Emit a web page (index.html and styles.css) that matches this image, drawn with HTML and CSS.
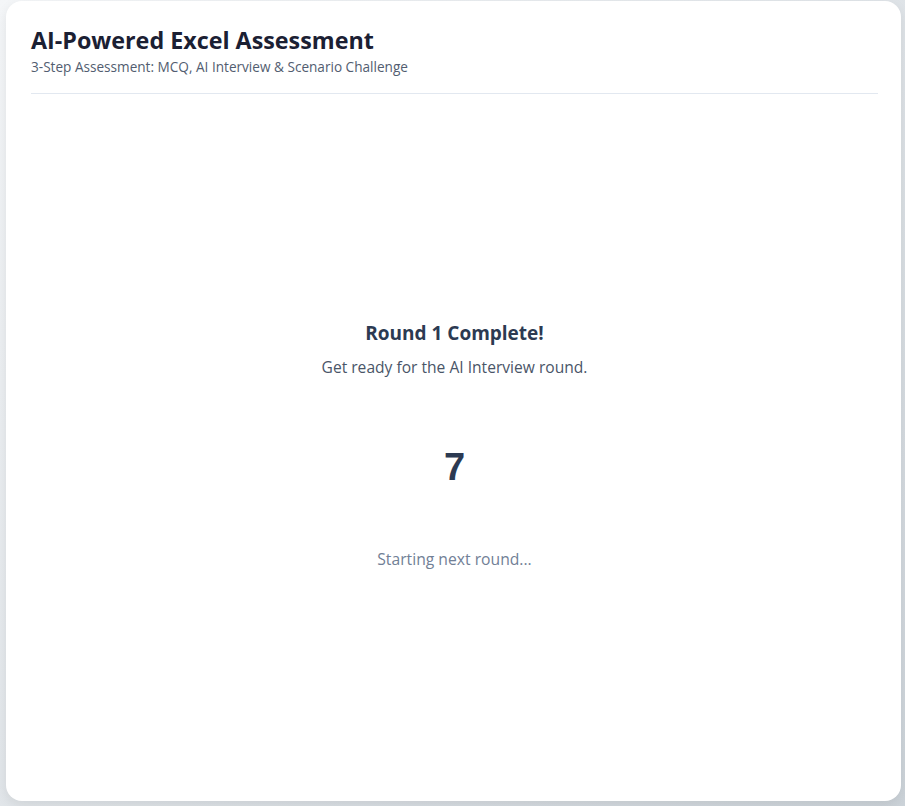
FILE: index.html
```html
<!DOCTYPE html>
<html lang="en">
<head>
<meta charset="utf-8">
<title>AI-Powered Excel Assessment</title>
<link rel="stylesheet" href="styles.css">
</head>
<body>
<main class="card">
  <header class="header">
    <h1 class="title">AI-Powered Excel Assessment</h1>
    <p class="subtitle">3-Step Assessment: MCQ, AI Interview &amp; Scenario Challenge</p>
  </header>
  <section class="transition">
    <h2 class="round-title">Round 1 Complete!</h2>
    <p class="round-text">Get ready for the AI Interview round.</p>
    <div class="countdown">7</div>
    <p class="next">Starting next round...</p>
  </section>
</main>
</body>
</html>
```
FILE: styles.css
```css
html, body {
  margin: 0;
  height: 100%;
}
body {
  background: linear-gradient(135deg, #f4f6f8 0%, #ccd3d9 100%);
  font-family: "Open Sans", "Noto Sans", sans-serif;
  padding: 1px 4px 5px 6px;
  box-sizing: border-box;
  overflow: hidden;
}
.card {
  background: #ffffff;
  border-radius: 16px;
  height: 800px;
  box-shadow: 0 4px 12px rgba(0, 0, 0, 0.08);
  padding: 0 23px 0 25px;
  box-sizing: border-box;
  display: flex;
  flex-direction: column;
}
.header {
  padding-top: 25px;
  padding-bottom: 18px;
  border-bottom: 1px solid #e2e8f0;
}
.title {
  margin: 0;
  font-size: 23.3px;
  font-weight: 700;
  color: #1b2033;
  line-height: 28px;
}
.subtitle {
  margin: 5px 0 0;
  font-size: 13.6px;
  color: #525d70;
  line-height: 16px;
}
.transition {
  flex: 1;
  display: flex;
  flex-direction: column;
  align-items: center;
  justify-content: center;
  text-align: center;
  padding-bottom: 6px;
}
.round-title {
  margin: 0;
  font-size: 19px;
  font-weight: 700;
  color: #2c3a52;
  line-height: 24px;
}
.round-text {
  margin: 12px 0 0;
  font-size: 15.6px;
  color: #4a5568;
  line-height: 20px;
}
.countdown {
  margin-top: 70px;
  font-size: 38px;
  font-weight: 700;
  color: #2c3a52;
  line-height: 40px;
  font-family: "Liberation Sans", sans-serif;
}
.next {
  margin: 62px 0 0;
  font-size: 15.7px;
  color: #718096;
  line-height: 20px;
}
```
